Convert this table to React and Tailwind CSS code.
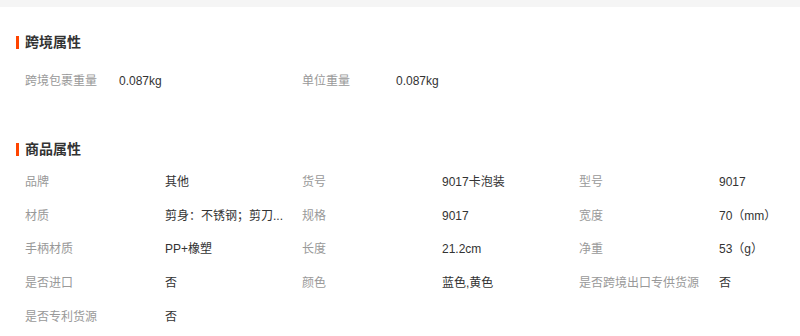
import React from 'react';

const font = { fontFamily: '"Liberation Sans", "Noto Sans CJK SC", sans-serif' };

const crossBorder = [
  ['跨境包裹重量', '0.087kg'],
  ['单位重量', '0.087kg'],
];

const productAttrs = [
  ['品牌', '其他'],
  ['货号', '9017卡泡装'],
  ['型号', '9017'],
  ['材质', '剪身：不锈钢；剪刀...'],
  ['规格', '9017'],
  ['宽度', '70（mm）'],
  ['手柄材质', 'PP+橡塑'],
  ['长度', '21.2cm'],
  ['净重', '53（g）'],
  ['是否进口', '否'],
  ['颜色', '蓝色,黄色'],
  ['是否跨境出口专供货源', '否'],
  ['是否专利货源', '否'],
];

// Section title with the orange marker on the left
const SectionTitle = ({ children, className = '' }) => (
  <div className={`flex items-center h-[20px] pl-[16px] ${className}`}>
    <span className="w-[3px] h-[13px] bg-[#ff4400] mr-[6px]" />
    <span className="text-[14px] font-bold text-[#333] leading-[20px]">{children}</span>
  </div>
);

export default function App() {
  return (
    <div className="w-[800px] h-[336px] bg-white overflow-hidden" style={font}>
      <div className="h-[7px] bg-[#f5f5f5]" />

      {/* 跨境属性 */}
      <SectionTitle className="mt-[25px]">跨境属性</SectionTitle>
      <div className="flex pl-[25px] mt-[12px] text-[12px]">
        {crossBorder.map(([label, value]) => (
          <div key={label} className="flex items-center h-[34px] w-[277px]">
            <span className="w-[94px] text-[#999] whitespace-nowrap">{label}</span>
            <span className="text-[#333] whitespace-nowrap">{value}</span>
          </div>
        ))}
      </div>

      {/* 商品属性 */}
      <SectionTitle className="mt-[41px]">商品属性</SectionTitle>
      <div className="grid grid-cols-[277px_277px_221px] pl-[25px] mt-[6px] text-[12px]">
        {productAttrs.map(([label, value]) => (
          <div key={label} className="flex items-center h-[33.75px]">
            <span className="w-[140px] shrink-0 text-[#999] whitespace-nowrap">{label}</span>
            <span className="text-[#333] whitespace-nowrap">{value}</span>
          </div>
        ))}
      </div>
    </div>
  );
}
